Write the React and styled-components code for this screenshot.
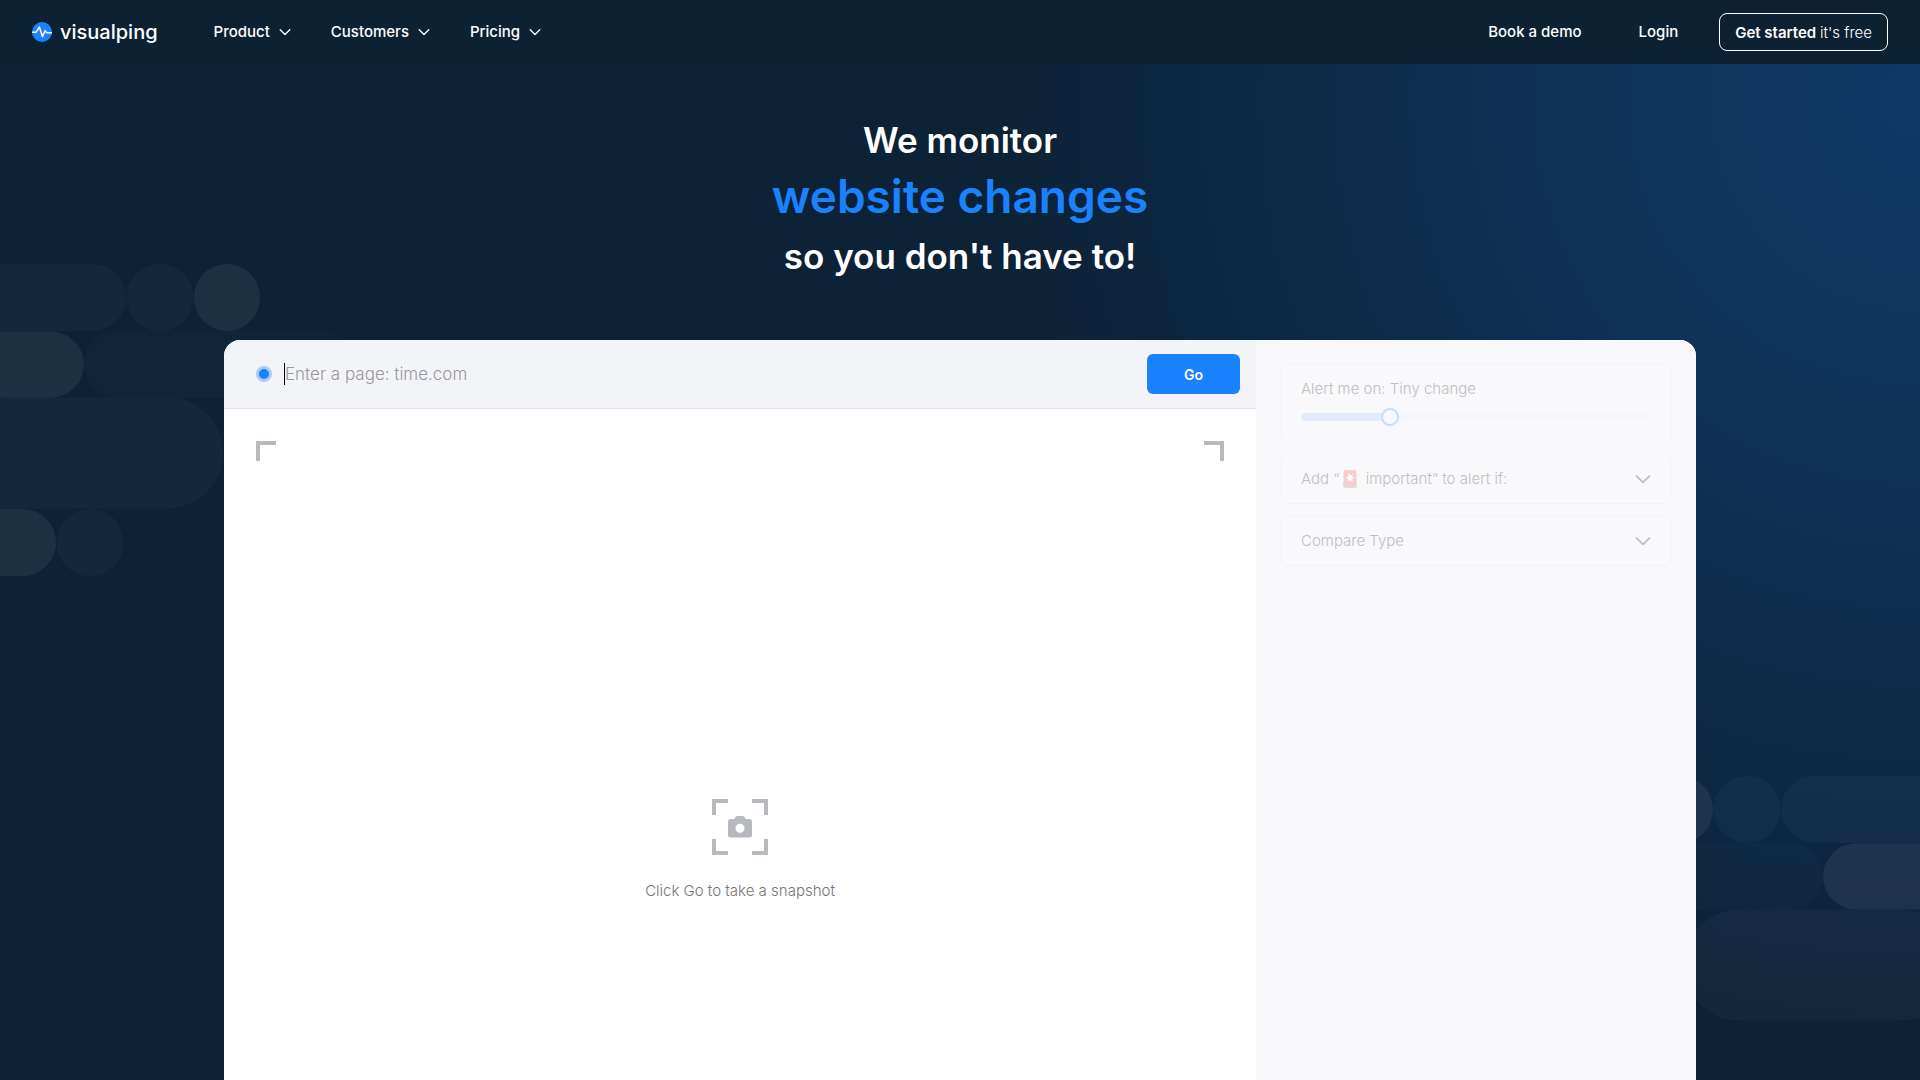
import React from "react";
import styled, { createGlobalStyle } from "styled-components";

const GlobalStyle = createGlobalStyle`
  * {
    box-sizing: border-box;
  }

  body {
    margin: 0;
    background: #0c2236;
    font-family: Inter, "Liberation Sans", sans-serif;
    color: #fff;
  }

  button, input {
    font-family: inherit;
  }
`;

const Page = styled.div`
  position: relative;
  display: flex;
  flex-direction: column;
  min-height: 100vh;
  overflow: hidden;
  background: radial-gradient(circle 920px at 100% 100px, #0f3a67 0%, #0e3054 45%, #0c2236 100%);
`;

const Decor = styled.svg`
  position: absolute;
  top: ${({ $top }) => $top}px;
  ${({ $side }) => $side}: 0;
  fill: #fff;
`;

const Header = styled.header`
  position: relative;
  display: flex;
  align-items: center;
  height: 64px;
  padding: 0 32px;
  background: #0c2233;
`;

const Logo = styled.a`
  display: flex;
  align-items: center;
  gap: 8px;
  margin-right: 56px;
  color: #fff;
  font-size: 20px;
  font-weight: 500;
  line-height: 24px;
  text-decoration: none;
`;

const Nav = styled.nav`
  display: flex;
  align-items: center;
  gap: 40px;
`;

const NavButton = styled.button`
  display: flex;
  align-items: center;
  gap: 9px;
  padding: 0;
  border: none;
  background: none;
  color: #fff;
  font-size: 15px;
  font-weight: 500;
  line-height: 24px;
  cursor: pointer;
`;

const Actions = styled.div`
  display: flex;
  align-items: center;
  margin-left: auto;
`;

const NavLink = styled.a`
  margin-right: ${({ $gap }) => $gap}px;
  color: #fff;
  font-size: 15px;
  font-weight: 500;
  line-height: 24px;
  text-decoration: none;
`;

const StartButton = styled.button`
  height: 38px;
  padding: 0 15px;
  border: 1px solid #fff;
  border-radius: 8px;
  background: none;
  color: #fff;
  font-size: 15px;
  font-weight: 600;
  cursor: pointer;

  span {
    font-weight: 300;
  }
`;

const Title = styled.h1`
  position: relative;
  margin: 48px 0 56px;
  font-size: 35px;
  font-weight: 600;
  line-height: 56px;
  text-align: center;

  span {
    display: block;
  }
`;

const Highlight = styled.span`
  margin-bottom: 4px;
  color: #1a82ff;
  font-size: 46px;
`;

const Panel = styled.main`
  position: relative;
  flex: 1;
  display: grid;
  grid-template-columns: 1fr 440px;
  width: calc(100% - 448px);
  max-width: 1472px;
  margin: 0 auto;
  border-radius: 16px 16px 0 0;
  overflow: hidden;
  background: #fff;
`;

const Preview = styled.section`
  display: flex;
  flex-direction: column;
`;

const UrlBar = styled.form`
  display: flex;
  align-items: center;
  height: 69px;
  padding: 0 16px 0 32px;
  border-bottom: 1px solid #e2e5ee;
  background: #f3f4f8;
`;

const Dot = styled.span`
  width: 16px;
  height: 16px;
  margin-right: 12px;
  border: 3px solid #a6cbfb;
  border-radius: 50%;
  background: #1a82ff;
`;

const Caret = styled.span`
  width: 1px;
  height: 22px;
  background: #000;
`;

const UrlInput = styled.input`
  flex: 1;
  padding: 0;
  border: none;
  outline: none;
  background: none;
  color: #222;
  font-size: 17px;
  font-weight: 300;
  line-height: 24px;

  &::placeholder {
    color: #98989b;
    opacity: 1;
  }
`;

const GoButton = styled.button`
  width: 93px;
  height: 40px;
  border: none;
  border-radius: 6px;
  background: #1a82ff;
  color: #fff;
  font-size: 14px;
  font-weight: 600;
  cursor: pointer;
`;

const Snapshot = styled.div`
  flex: 1;
  padding: 32px;
`;

const Corners = styled.div`
  display: flex;
  justify-content: space-between;
`;

const Corner = styled.span`
  width: 20px;
  height: 20px;
  border-top: 4px solid #b6babf;
  border-${({ $side }) => $side}: 4px solid #b6babf;
`;

const Prompt = styled.div`
  display: flex;
  flex-direction: column;
  align-items: center;
  gap: 24px;
  margin-top: 338px;
  color: #747474;
  font-size: 15px;
  font-weight: 300;
  line-height: 24px;
`;

const Sidebar = styled.aside`
  display: flex;
  flex-direction: column;
  gap: 12px;
  padding: 24px;
  background: #f8f8fb;
  color: #bfbfc1;
  font-size: 15px;
  font-weight: 300;
  line-height: 24px;
`;

const SliderCard = styled.div`
  display: flex;
  flex-direction: column;
  gap: 7px;
  padding: 12px 20px 15px;
  border: 1px solid #f4f4f6;
  border-radius: 8px;
  background: #f9f9fc;
`;

const Slider = styled.input`
  appearance: none;
  width: 100%;
  height: 18px;
  margin: 0;
  background: none;

  &::-webkit-slider-runnable-track {
    height: 8px;
    border-radius: 4px;
    background: linear-gradient(to right, #e3ecfb 25%, #f5f7fb 25%);
  }

  &::-webkit-slider-thumb {
    appearance: none;
    width: 18px;
    height: 18px;
    margin-top: -5px;
    border: 2px solid #c4dcfb;
    border-radius: 50%;
    background: #f9f9fc;
    box-shadow: 0 2px 6px #eef3fc;
  }
`;

const OptionCard = styled.button`
  display: flex;
  align-items: center;
  justify-content: space-between;
  height: 50px;
  padding: 0 20px;
  border: 1px solid #f4f4f6;
  border-radius: 8px;
  background: #f9f9fc;
  color: inherit;
  font-size: inherit;
  font-weight: inherit;
  line-height: inherit;

  span {
    display: flex;
    align-items: center;
  }
`;

const SirenIcon = styled.svg`
  margin: 0 4px;
`;

const Chevron = ({ size = 12, stroke = 1.3 }) => (
  <svg width={size} height={size} viewBox="0 0 12 12" fill="none" stroke="currentColor" strokeWidth={stroke} strokeLinecap="round" strokeLinejoin="round">
    <path d="M1.2 3.8 6 8.5l4.800-4.700" />
  </svg>
);

const LogoMark = () => (
  <svg width="20" height="20" viewBox="0 0 20 20" fill="none">
    <circle cx="10" cy="10" r="10" fill="#1a82ff" />
    <path d="M0 10.200h4.200L7.400 5l3 9.600 2.700-6 1.600 2.200H20" stroke="#fff" strokeWidth="1.5" strokeLinejoin="round" />
  </svg>
);

const Siren = () => (
  <SirenIcon width="14" height="20" viewBox="0 0 14 20">
    <rect y="13" width="14" height="6" rx="2.500" fill="#e2dcdf" />
    <path d="M.5 15.500V4q0-3 3-3h7q3 0 3 3v11.500q-6.500 2-13 0z" fill="#f7cdcd" />
    <path d="m6 4 1.300 2.700L10 5 9 8l3 1-3 1 1 3-3-2-2 2 .3-3L2.500 9 5 8z" fill="#fff" />
  </SirenIcon>
);

const CameraIcon = () => (
  <svg width="56" height="56" viewBox="0 0 56 56" fill="none">
    <path d="M2 16V2h14M40 2h14v14M54 40v14H40M16 54H2V40" stroke="#b6babf" strokeWidth="4" />
    <path fillRule="evenodd" d="M22.500 20l.8-1.800q.5-1.200 1.800-1.200h5.800q1.300 0 1.800 1.200l.8 1.800h4q2.500 0 2.500 2.500v13.500q0 2.500-2.500 2.500h-19Q16 38.500 16 36V22.500q0-2.500 2.500-2.500zM28 24.700a4.500 4.500 0 1 0 0 9 4.500 4.500 0 0 0 0-9z" fill="#b6babf" />
  </svg>
);

const Pills = ({ last }) => (
  <>
    <rect x="-100" y="0" width="226" height="67" rx="33.500" opacity=".03" />
    <rect x="126.500" y="0" width="67" height="67" rx="33.500" opacity=".03" />
    <rect x="194" y="0" width="66" height="67" rx="33" opacity=".065" />
    <rect x="-100" y="67.500" width="184" height="66" rx="33" opacity=".065" />
    <rect x="84" y="67" width="270" height="67" rx="33.500" opacity=".014" />
    <rect x="-49" y="133.500" width="272" height="111" rx="55.500" opacity=".03" />
    {last && <rect x="-100" y="245" width="156" height="67" rx="33.500" opacity=".065" />}
    {last && <rect x="56.500" y="245" width="67" height="67" rx="33.500" opacity=".03" />}
  </>
);

const App = () => (
  <>
    <GlobalStyle />
    <Page>
      <Decor $top={264} $side="left" width="360" height="320">
        <Pills last />
      </Decor>
      <Decor $top={776} $side="right" width="360" height="250">
        <g transform="translate(347) scale(-1 1)">
          <Pills />
        </g>
      </Decor>

      <Header>
        <Logo href="#">
          <LogoMark />
          visualping
        </Logo>
        <Nav>
          {["Product", "Customers", "Pricing"].map((item) => (
            <NavButton key={item} type="button">
              {item}
              <Chevron />
            </NavButton>
          ))}
        </Nav>
        <Actions>
          <NavLink href="#demo" $gap={57}>Book a demo</NavLink>
          <NavLink href="#login" $gap={41}>Login</NavLink>
          <StartButton type="button">
            Get started <span>it's free</span>
          </StartButton>
        </Actions>
      </Header>

      <Title>
        <span>We monitor</span>
        <Highlight>website changes</Highlight>
        <span>so you don't have to!</span>
      </Title>

      <Panel>
        <Preview>
          <UrlBar onSubmit={(e) => e.preventDefault()}>
            <Dot />
            <Caret />
            <UrlInput type="text" aria-label="Page address" placeholder="Enter a page: time.com" />
            <GoButton type="submit">Go</GoButton>
          </UrlBar>
          <Snapshot>
            <Corners>
              <Corner $side="left" />
              <Corner $side="right" />
            </Corners>
            <Prompt>
              <CameraIcon />
              Click Go to take a snapshot
            </Prompt>
          </Snapshot>
        </Preview>

        <Sidebar>
          <SliderCard>
            <label htmlFor="sensitivity">Alert me on: Tiny change</label>
            <Slider id="sensitivity" type="range" min="0" max="100" defaultValue="24" disabled />
          </SliderCard>
          <OptionCard type="button" disabled>
            <span>Add “<Siren />&nbsp;important” to alert if:</span>
            <Chevron size={16} stroke={1.4} />
          </OptionCard>
          <OptionCard type="button" disabled>
            Compare Type
            <Chevron size={16} stroke={1.4} />
          </OptionCard>
        </Sidebar>
      </Panel>
    </Page>
  </>
);

export default App;
